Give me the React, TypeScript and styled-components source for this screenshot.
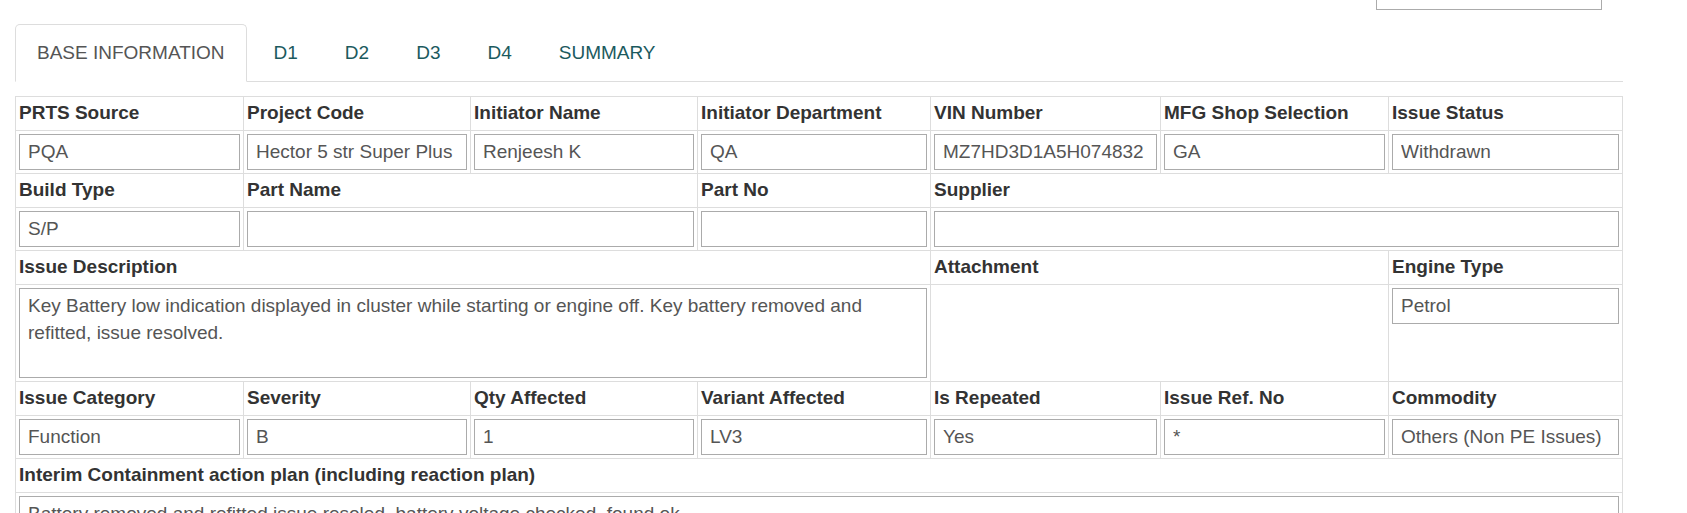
import React from "react";
import styled, { createGlobalStyle } from "styled-components";

const GlobalStyle = createGlobalStyle`
  html, body {
    margin: 0;
    padding: 0;
    background: #ffffff;
    overflow: hidden;
  }
  body {
    font-family: "Liberation Sans", Arial, Helvetica, sans-serif;
    font-size: 19px;
    line-height: 27px;
    color: #333333;
  }
  * { box-sizing: border-box; }
`;

const Page = styled.div`
  width: 1608px;
  margin-left: 15px;
  display: flex;
  flex-direction: column;
`;

const TopBar = styled.div`
  height: 24px;
  display: flex;
  justify-content: flex-end;
  padding-right: 21px;
`;

const SearchBox = styled.div`
  width: 226px;
  height: 36px;
  margin-top: -26px;
  border: 1px solid #ababab;
  background: #ffffff;
`;

const TabList = styled.ul`
  list-style: none;
  margin: 0;
  padding: 0;
  display: flex;
  border-bottom: 1px solid #dddddd;
`;

const TabItem = styled.li<{ $active?: boolean }>`
  margin-bottom: -1px;
  margin-right: ${(p) => (p.$active ? "5px" : "3px")};
  padding: 14px 21px 15px;
  line-height: 27px;
  font-size: 19px;
  color: ${(p) => (p.$active ? "#555555" : "#1b5a5e")};
  border: 1px solid ${(p) => (p.$active ? "#dddddd" : "transparent")};
  border-bottom-color: ${(p) => (p.$active ? "#ffffff" : "transparent")};
  border-radius: 5px 5px 0 0;
  background: ${(p) => (p.$active ? "#ffffff" : "transparent")};
  white-space: nowrap;
  cursor: pointer;
`;

const FormGrid = styled.div`
  margin-top: 14px;
  display: grid;
  grid-template-columns: 228px 227px 227px 233px 230px 228px 234px;
  border-top: 1px solid #dddddd;
  border-left: 1px solid #dddddd;
`;

const LabelCell = styled.div<{ $span?: number }>`
  grid-column: span ${(p) => p.$span ?? 1};
  padding: 2px 3px 4px;
  height: 34px;
  font-weight: bold;
  font-size: 19px;
  line-height: 27px;
  color: #333333;
  border-right: 1px solid #dddddd;
  border-bottom: 1px solid #dddddd;
  white-space: nowrap;
  overflow: hidden;
`;

const FieldCell = styled.div<{ $span?: number }>`
  grid-column: span ${(p) => p.$span ?? 1};
  padding: 3px;
  border-right: 1px solid #dddddd;
  border-bottom: 1px solid #dddddd;
  display: flex;
  flex-direction: column;
  align-items: stretch;
`;

const TextInput = styled.input`
  width: 100%;
  height: 36px;
  margin: 0;
  padding: 0 8px;
  font-family: "Liberation Sans", Arial, Helvetica, sans-serif;
  font-size: 19px;
  color: #555555;
  background: #ffffff;
  border: 1px solid #ababab;
  border-radius: 0;
  outline: none;
`;

const TextArea = styled.textarea`
  width: 100%;
  height: 90px;
  margin: 0;
  padding: 3px 8px;
  font-family: "Liberation Sans", Arial, Helvetica, sans-serif;
  font-size: 19px;
  line-height: 27px;
  color: #555555;
  background: #ffffff;
  border: 1px solid #ababab;
  border-radius: 0;
  resize: none;
  outline: none;
  display: block;
`;

type Field = { label: string; value?: string; span?: number };

const Label = ({ f }: { f: Field }) => <LabelCell $span={f.span}>{f.label}</LabelCell>;

const Input = ({ f }: { f: Field }) => (
  <FieldCell $span={f.span}>
    <TextInput readOnly value={f.value ?? ""} />
  </FieldCell>
);

const row1: Field[] = [
  { label: "PRTS Source", value: "PQA" },
  { label: "Project Code", value: "Hector 5 str Super Plus" },
  { label: "Initiator Name", value: "Renjeesh K" },
  { label: "Initiator Department", value: "QA" },
  { label: "VIN Number", value: "MZ7HD3D1A5H074832" },
  { label: "MFG Shop Selection", value: "GA" },
  { label: "Issue Status", value: "Withdrawn" },
];

const row2: Field[] = [
  { label: "Build Type", value: "S/P" },
  { label: "Part Name", value: "", span: 2 },
  { label: "Part No", value: "" },
  { label: "Supplier", value: "", span: 3 },
];

const row4: Field[] = [
  { label: "Issue Category", value: "Function" },
  { label: "Severity", value: "B" },
  { label: "Qty Affected", value: "1" },
  { label: "Variant Affected", value: "LV3" },
  { label: "Is Repeated", value: "Yes" },
  { label: "Issue Ref. No", value: "*" },
  { label: "Commodity", value: "Others (Non PE Issues)" },
];

const tabs = ["BASE INFORMATION", "D1", "D2", "D3", "D4", "SUMMARY"];

export default function App() {
  return (
    <>
      <GlobalStyle />
      <Page>
        <TopBar>
          <SearchBox />
        </TopBar>
        <TabList>
          {tabs.map((t, i) => (
            <TabItem key={t} $active={i === 0}>
              {t}
            </TabItem>
          ))}
        </TabList>
        <FormGrid>
          {row1.map((f) => (
            <Label key={f.label} f={f} />
          ))}
          {row1.map((f) => (
            <Input key={f.label} f={f} />
          ))}

          {row2.map((f) => (
            <Label key={f.label} f={f} />
          ))}
          {row2.map((f) => (
            <Input key={f.label} f={f} />
          ))}

          <LabelCell $span={4}>Issue Description</LabelCell>
          <LabelCell $span={2}>Attachment</LabelCell>
          <LabelCell>Engine Type</LabelCell>
          <FieldCell $span={4}>
            <TextArea
              readOnly
              value="Key Battery low indication displayed in cluster while starting or engine off. Key battery removed and refitted, issue resolved."
            />
          </FieldCell>
          <FieldCell $span={2} />
          <FieldCell>
            <TextInput readOnly value="Petrol" />
          </FieldCell>

          {row4.map((f) => (
            <Label key={f.label} f={f} />
          ))}
          {row4.map((f) => (
            <Input key={f.label} f={f} />
          ))}

          <LabelCell $span={7}>Interim Containment action plan (including reaction plan)</LabelCell>
          <FieldCell $span={7}>
            <TextArea
              readOnly
              value="Battery removed and refitted issue resoled, battery voltage checked, found ok"
            />
          </FieldCell>
        </FormGrid>
      </Page>
    </>
  );
}
